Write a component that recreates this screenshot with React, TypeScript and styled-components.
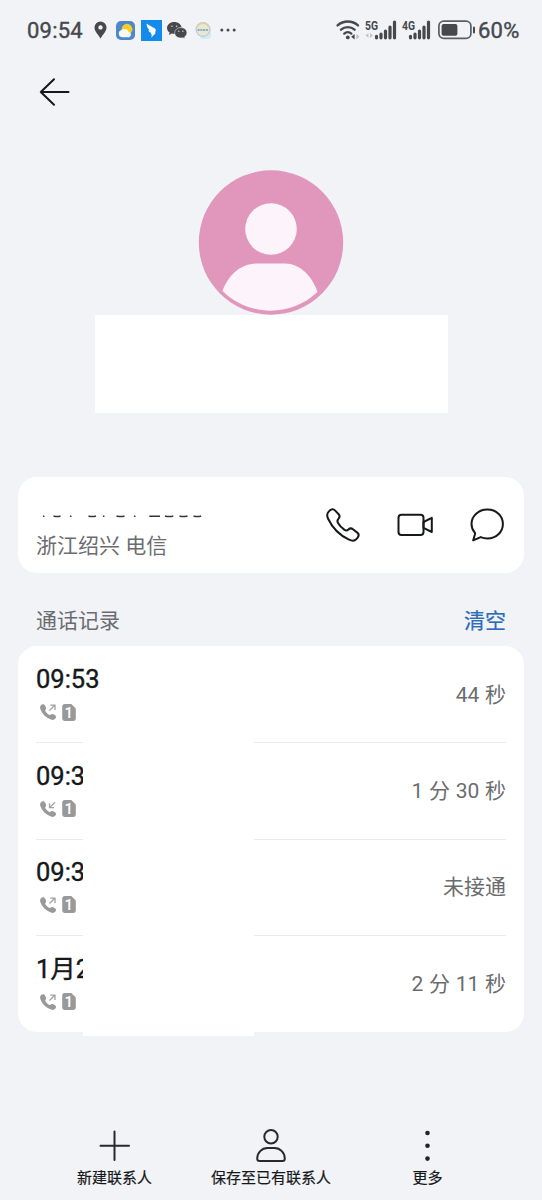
import React from 'react';
import styled, { createGlobalStyle } from 'styled-components';

const GlobalStyle = createGlobalStyle`
  * {
    box-sizing: border-box;
  }

  body {
    margin: 0;
    background: #f1f3f7;
    font-family: Roboto, 'Noto Sans CJK SC', sans-serif;
    color: #17181a;
  }

  svg {
    display: block;
    flex: none;
    overflow: visible;
  }
`;

// Styled components
const Screen = styled.div`
  display: flex;
  flex-direction: column;
  width: 542px;
  height: 1200px;
  overflow: hidden;
  background: #f1f3f7;
`;

const StatusBar = styled.div`
  display: flex;
  justify-content: space-between;
  height: 60px;
  padding: 0 23px 0 27px;
  color: #45484d;
`;

const StatusGroup = styled.div`
  display: flex;
  align-items: center;
  height: 60px;
`;

const StatusText = styled.span<{ $width: number }>`
  width: ${(p) => p.$width}px;
  padding-top: 1px;
  font-size: 22px;
  line-height: 26px;
  letter-spacing: 0.2px;
  -webkit-text-stroke: 0.4px #45484d;
  white-space: nowrap;
`;

const Header = styled.header`
  height: 110px;
  padding: 18px 39px 0;
`;

const Profile = styled.section`
  display: flex;
  flex-direction: column;
  align-items: center;
  height: 307px;
`;

const NameBox = styled.div`
  width: 353px;
  height: 98px;
  background: #fff;
`;

const Card = styled.section`
  margin: 0 18px;
  border-radius: 19px;
  background: #fff;
`;

const NumberCard = styled(Card)`
  display: flex;
  justify-content: space-between;
  height: 96px;
  padding: 0 20px 0 18px;
`;

const NumberInfo = styled.div`
  padding-top: 37px;
`;

const Region = styled.div`
  margin-top: 11px;
  font-size: 21px;
  line-height: 30px;
  color: #6b6c6e;
`;

const Actions = styled.div`
  display: flex;
  align-items: center;
  gap: 37px;
`;

const SectionHead = styled.div`
  display: flex;
  align-items: center;
  justify-content: space-between;
  height: 73px;
  padding: 18px 36px 0;
  font-size: 21px;
  color: #6a6c70;
`;

const ClearButton = styled.button`
  padding: 0;
  border: 0;
  background: none;
  font: inherit;
  -webkit-text-stroke: 0.2px #2d6cb8;
  color: #2d6cb8;
`;

const LogCard = styled(Card)`
  position: relative;
  height: 386px;
  padding: 1px 18px 0;
`;

const LogRow = styled.div`
  display: flex;
  align-items: center;
  justify-content: space-between;
  height: 96.4px;
  border-bottom: 1px solid #ebebed;

  &:nth-child(4) {
    border-bottom: 0;
  }
`;

const LogEntry = styled.div`
  padding-bottom: 3px;
`;

const LogTime = styled.div`
  height: 31px;
  font-size: 25.5px;
  line-height: 31px;
  -webkit-text-stroke: 0.4px #17181a;
  white-space: nowrap;
`;

const LogMeta = styled.div`
  display: flex;
  align-items: center;
  gap: 5px;
  height: 20px;
  margin-top: 7px;
  padding-left: 3px;
`;

const Duration = styled.div`
  font-size: 21px;
  line-height: 30px;
  word-spacing: 0.5px;
  color: #6b6c6e;
`;

// Blank patch lying over the middle of the log list
const Cover = styled.div`
  position: absolute;
  top: 92px;
  left: 65px;
  width: 171px;
  height: 298px;
  background: #fff;
`;

const BottomBar = styled.nav`
  display: grid;
  grid-template-columns: repeat(3, 156.5px);
  justify-content: center;
  margin-top: auto;
  height: 73px;
`;

const Tab = styled.div`
  display: flex;
  flex-direction: column;
  align-items: center;
  font-size: 15px;
  line-height: 22px;
  -webkit-text-stroke: 0.2px #17181a;
  white-space: nowrap;

  svg {
    margin-bottom: 4px;
  }
`;

const Spacer = styled.div<{ $w: number }>`
  flex: none;
  width: ${(p) => p.$w}px;
`;

// Icons
const PinIcon = () => (
  <svg width="13" height="18" viewBox="0 0 13 18">
    <path
      fill="#45484d"
      fillRule="evenodd"
      d="M6.5.5a6 6 0 0 0-6 6C.5 10.5 4.6 14 6.5 17.5 8.4 14 12.5 10.5 12.5 6.5a6 6 0 0 0-6-6Zm0 3.7a2.2 2.2 0 1 1 0 4.4 2.2 2.2 0 0 1 0-4.4Z"
    />
  </svg>
);

const WeatherIcon = () => (
  <svg width="19" height="19" viewBox="0 0 19 19">
    <rect width="19" height="19" rx="5" fill="#4d88cb" />
    <circle cx="11" cy="8.2" r="5.4" fill="#f7cc28" />
    <path d="M6 16.2a3.6 3.6 0 0 1-.3-7.1 4.2 4.2 0 0 1 7 2A2.6 2.6 0 0 1 13 16.2Z" fill="#f8fbf4" />
  </svg>
);

const WingIcon = () => (
  <svg width="21" height="21" viewBox="0 0 21 21">
    <rect width="21" height="21" fill="#128bec" />
    <path d="M5.7 3.5C8 5.7 13 7.3 14.6 9.3c.6.9 0 2.4-.8 3.5h1.2L10.200 17.800l.8-3.300H9.600l.8-1.500c-1.600-.5-2.700-1.600-3-2.800l1.400.1C6.700 8.800 5.500 6.400 5.700 3.500Z" fill="#fff" />
  </svg>
);

const WechatIcon = () => (
  <svg width="20" height="17" viewBox="0 0 20 17">
    <path fill="#45484d" d="M7.3 0C3.2 0 0 2.7 0 6c0 1.9 1 3.5 2.6 4.6L2 12.9l2.6-1.4c1 .3 2 .4 3.2.4C8 8 10.6 5.4 14.6 5.3 14 2.2 11 0 7.3 0Z" />
    <path fill="#45484d" stroke="#f1f3f7" strokeWidth=".5" d="M13.8 5.6c-3.5 0-6.1 2.3-6.1 5.2s2.6 5.2 6.1 5.2c.8 0 1.5-.1 2.2-.3l2 1.1-.5-1.8c1.5-1 2.4-2.5 2.4-4.2 0-2.9-2.6-5.2-6.1-5.2Z" />
    <g fill="#d5d7da">
      <circle cx="4.9" cy="4.2" r=".8" />
      <circle cx="9.6" cy="4.2" r=".8" />
      <circle cx="11.8" cy="9.3" r=".7" />
      <circle cx="15.9" cy="9.3" r=".7" />
    </g>
  </svg>
);

const BadgeIcon = () => (
  <svg width="17" height="18" viewBox="0 0 17 18">
    <path d="M3 9h13v6a3 3 0 0 1-3 3H6Z" fill="#d5e9f3" />
    <circle cx="8" cy="8.5" r="6.9" fill="#e9e6d6" stroke="#b4cfd5" strokeWidth="1.2" />
    <path d="M2.5 5a7 7 0 0 1 11 0" fill="none" stroke="#e3cf98" strokeWidth="1.5" />
    <path d="M2.5 9h11" stroke="#8fb0ba" strokeWidth="2.2" strokeDasharray="2.2 .6" />
  </svg>
);

const MoreDots = () => (
  <svg width="16" height="4" viewBox="0 0 16 4">
    <g fill="#45484d">
      <circle cx="1.8" cy="2" r="1.5" />
      <circle cx="8" cy="2" r="1.5" />
      <circle cx="14.2" cy="2" r="1.5" />
    </g>
  </svg>
);

const WifiIcon = () => (
  <svg width="24" height="20" viewBox="0 0 24 20">
    <g fill="none" stroke="#45484d" strokeWidth="2.4" strokeLinecap="round">
      <path d="M1.6 5.4c5.8-5.2 14.6-5.2 20.4 0" />
      <path d="M5 9.7c3.8-3.4 9.8-3.4 13.6 0" />
      <path d="M8.3 13.6c2-1.8 5-1.8 7 0" />
    </g>
    <circle cx="11.8" cy="17.4" r="1.9" fill="#45484d" />
    <path d="M18.6 14v5.5l-3.5-2.7Z" fill="#45484d" />
    <path d="M20.3 14v5.5l3.2-2.7Z" fill="#bfc1c6" />
  </svg>
);

const SignalIcon = ({ label, offset, arrows }: { label: string; offset: number; arrows?: boolean }) => (
  <svg width={offset + 22} height="20" viewBox={`0 0 ${offset + 22} 20`}>
    <text x="0" y="9.5" fontSize="12.5" fontWeight="700" textLength="13" lengthAdjust="spacingAndGlyphs" fill="#45484d">
      {label}
    </text>
    {arrows && <path d="M3.5 13v5L.5 15.5ZM5 13v5l3-2.5Z" fill="#c3c5c9" />}
    <g stroke="#45484d" strokeWidth="3.2" strokeLinecap="round">
      <path d={`M${offset + 1.5} 16.3v1.5M${offset + 6} 14v3.8M${offset + 10.5} 11v6.8M${offset + 15} 7v10.8M${offset + 19.5} 2v15.8`} />
    </g>
  </svg>
);

const BatteryIcon = () => (
  <svg width="38" height="20" viewBox="0 0 38 20">
    <rect x=".9" y="1.2" width="32" height="17.2" rx="4.8" fill="none" stroke="#5b5e62" strokeWidth="1.7" />
    <rect x="3.6" y="4" width="15.8" height="11.8" rx="2" fill="#45484d" />
    <path d="M36 7.5v5" stroke="#45484d" strokeWidth="2" strokeLinecap="round" />
  </svg>
);

const BackIcon = () => (
  <svg width="31" height="29" viewBox="0 0 31 29">
    <path d="M15 1.2 1.8 14 15 26.8M1.8 14H29.5" fill="none" stroke="#17181a" strokeWidth="2" strokeLinecap="round" strokeLinejoin="round" />
  </svg>
);

const Avatar = () => (
  <svg width="145" height="145" viewBox="0 0 145 145">
    <circle cx="72" cy="72.5" r="72.2" fill="#e196bc" />
    <circle cx="72" cy="59" r="25.8" fill="#fdf3fa" />
    <path d="M23.5 121C29 105 42 93.5 58 93.5H86C101 93.5 113 106 118.5 122C92 147 50 147 23.5 121Z" fill="#fdf3fa" />
  </svg>
);

// Lower edges of the digits that stay visible under the hidden number
const NumberEdge = () => (
  <svg width="170" height="6" viewBox="0 0 170 6">
    <path
      d="M7.7 1.5V3M34.7 1.5V3M67.7 1.5V3M98.7 1.5V3M17.5 2Q21 3.1 24.5 2M52.5 2Q56.3 3.1 60 2M80.5 2Q84.5 3.1 88.500 2M113.300 2.300H124M129 2Q133 3.100 137.300 2M143.500 2Q147.500 3.100 151.500 2M157.500 2Q161.500 3.100 165.200 2"
      fill="none"
      stroke="#343538"
      strokeWidth="1.5"
    />
  </svg>
);

const PhoneIcon = () => (
  <svg width="34" height="34" viewBox="0 0 34 34">
    <path
      d="M3.7 2.6C5.5.9 7.7 1 9.2 2.6L12.7 6.2C14.2 7.9 13.9 9.3 12.4 10.9C11 12.4 11 13.3 12 15C13.7 17.8 15.8 20 18.5 21.9C20 22.9 21 22.9 22.4 21.6C23.9 20.2 25.4 20 26.9 21.2L31.3 24.6C33 26 33 27.9 31.7 29.6L30.3 31.2C28.6 33.1 25.8 33 23 31.7C13.5 27.1 6.3 19.6 2.1 10.7C.8 7.9 1 5.3 2.7 3.6Z"
      fill="none"
      stroke="#17181a"
      strokeWidth="2"
      strokeLinejoin="round"
    />
  </svg>
);

const VideoIcon = () => (
  <svg width="36" height="24" viewBox="0 0 36 24">
    <g fill="none" stroke="#17181a" strokeWidth="2" strokeLinejoin="round">
      <rect x="1.5" y="1.7" width="25" height="20.4" rx="3" />
      <path d="M26.5 9 34.800 4.800V19L26.500 14.800Z" />
    </g>
  </svg>
);

const ChatIcon = () => (
  <svg width="34" height="34" viewBox="0 0 34 34">
    <path
      d="M17.4 1.6C26.2 1.6 32.9 7.9 32.9 16S26.2 30.4 17.4 30.4C15 30.4 12.8 29.9 10.7 29.1L3.2 32.3 5 26.2C5.2 25.5 5 25 4.6 24.4C2.6 22 1.5 19.2 1.5 16 1.5 7.9 8.6 1.6 17.4 1.6Z"
      fill="none"
      stroke="#17181a"
      strokeWidth="2"
      strokeLinejoin="round"
    />
  </svg>
);

const CallIcon = ({ incoming }: { incoming?: boolean }) => (
  <svg width="18" height="18" viewBox="0 0 18 18">
    <path
      d="M2.4 1.8C3.7.8 5.3 1.2 6 2.5L6.9 4.3C7.4 5.4 7 6.1 6.4 6.9C6 7.5 6.1 8 6.5 8.6C7.4 10 8.5 11 9.9 11.8C10.6 12.2 11.1 12.1 11.7 11.5C12.5 10.9 13.3 10.8 14.3 11.3L16 12.3C17.3 13.2 17.3 14.5 16.4 15.6C15.3 17 13.7 17.2 12 16.6C6.7 14.6 3.1 10.8 1.4 6.2C.8 4.4 1 2.9 2.4 1.8Z"
      fill="#999"
    />
    <path
      d={incoming ? 'M16 2.2 10.8 7.4M10.5 3.2V7.7H15' : 'M10.5 7.5 16 2M11.3 2.2H16V7'}
      fill="none"
      stroke="#a2a2a2"
      strokeWidth="1.3"
    />
  </svg>
);

const SimIcon = () => (
  <svg width="14" height="17" viewBox="0 0 14 17">
    <path d="M2.7 0H9.3L13.8 4.5V14Q13.8 16.9 11 16.9H3Q.2 16.9.2 14V2.8Q.2 0 2.7 0Z" fill="#999" />
    <text x="6.7" y="13.7" fontSize="15" fontWeight="500" textAnchor="middle" fill="#fff">
      1
    </text>
  </svg>
);

const PlusIcon = () => (
  <svg width="36" height="36" viewBox="0 0 36 36">
    <path d="M17.5 4.5V33M3.5 18.8H32" fill="none" stroke="#27292c" strokeWidth="2" strokeLinecap="round" />
  </svg>
);

const PersonIcon = () => (
  <svg width="36" height="36" viewBox="0 0 36 36">
    <g fill="none" stroke="#27292c" strokeWidth="2">
      <circle cx="18" cy="9.7" r="6.7" />
      <path d="M4.2 31.5C4.2 25.8 8.8 21 14.5 21H21.5C27.2 21 31.8 25.8 31.8 31.5Q31.8 34 29.5 34H6.5Q4.2 34 4.2 31.5Z" />
    </g>
  </svg>
);

const MoreIcon = () => (
  <svg width="36" height="36" viewBox="0 0 36 36">
    <g fill="#222326">
      <circle cx="17.5" cy="6" r="2.3" />
      <circle cx="17.5" cy="18.8" r="2.3" />
      <circle cx="17.5" cy="31.6" r="2.3" />
    </g>
  </svg>
);

type Call = { time: string; duration: string; incoming?: boolean };

const calls: Call[] = [
  { time: '09:53', duration: '44 秒' },
  { time: '09:3', duration: '1 分 30 秒', incoming: true },
  { time: '09:3', duration: '未接通' },
  { time: '1月2', duration: '2 分 11 秒' },
];

const App = () => {
  return (
    <Screen>
      <GlobalStyle />
      <StatusBar>
        <StatusGroup>
          <StatusText $width={67}>09:54</StatusText>
          <PinIcon />
          <Spacer $w={9} />
          <WeatherIcon />
          <Spacer $w={6} />
          <WingIcon />
          <Spacer $w={5} />
          <WechatIcon />
          <Spacer $w={8} />
          <BadgeIcon />
          <Spacer $w={8} />
          <MoreDots />
        </StatusGroup>
        <StatusGroup>
          <WifiIcon />
          <Spacer $w={5} />
          <SignalIcon label="5G" offset={10} arrows />
          <Spacer $w={5} />
          <SignalIcon label="4G" offset={7} />
          <Spacer $w={7} />
          <BatteryIcon />
          <Spacer $w={2} />
          <StatusText $width={41}>60%</StatusText>
        </StatusGroup>
      </StatusBar>

      <Header>
        <BackIcon />
      </Header>

      <Profile>
        <Avatar />
        <NameBox />
      </Profile>

      <NumberCard>
        <NumberInfo>
          <NumberEdge />
          <Region>浙江绍兴 电信</Region>
        </NumberInfo>
        <Actions>
          <PhoneIcon />
          <VideoIcon />
          <ChatIcon />
        </Actions>
      </NumberCard>

      <SectionHead>
        <span>通话记录</span>
        <ClearButton>清空</ClearButton>
      </SectionHead>

      <LogCard>
        {calls.map((call, i) => (
          <LogRow key={i}>
            <LogEntry>
              <LogTime>{call.time}</LogTime>
              <LogMeta>
                <CallIcon incoming={call.incoming} />
                <SimIcon />
              </LogMeta>
            </LogEntry>
            <Duration>{call.duration}</Duration>
          </LogRow>
        ))}
        <Cover />
      </LogCard>

      <BottomBar>
        <Tab>
          <PlusIcon />
          新建联系人
        </Tab>
        <Tab>
          <PersonIcon />
          保存至已有联系人
        </Tab>
        <Tab>
          <MoreIcon />
          更多
        </Tab>
      </BottomBar>
    </Screen>
  );
};

export default App;
